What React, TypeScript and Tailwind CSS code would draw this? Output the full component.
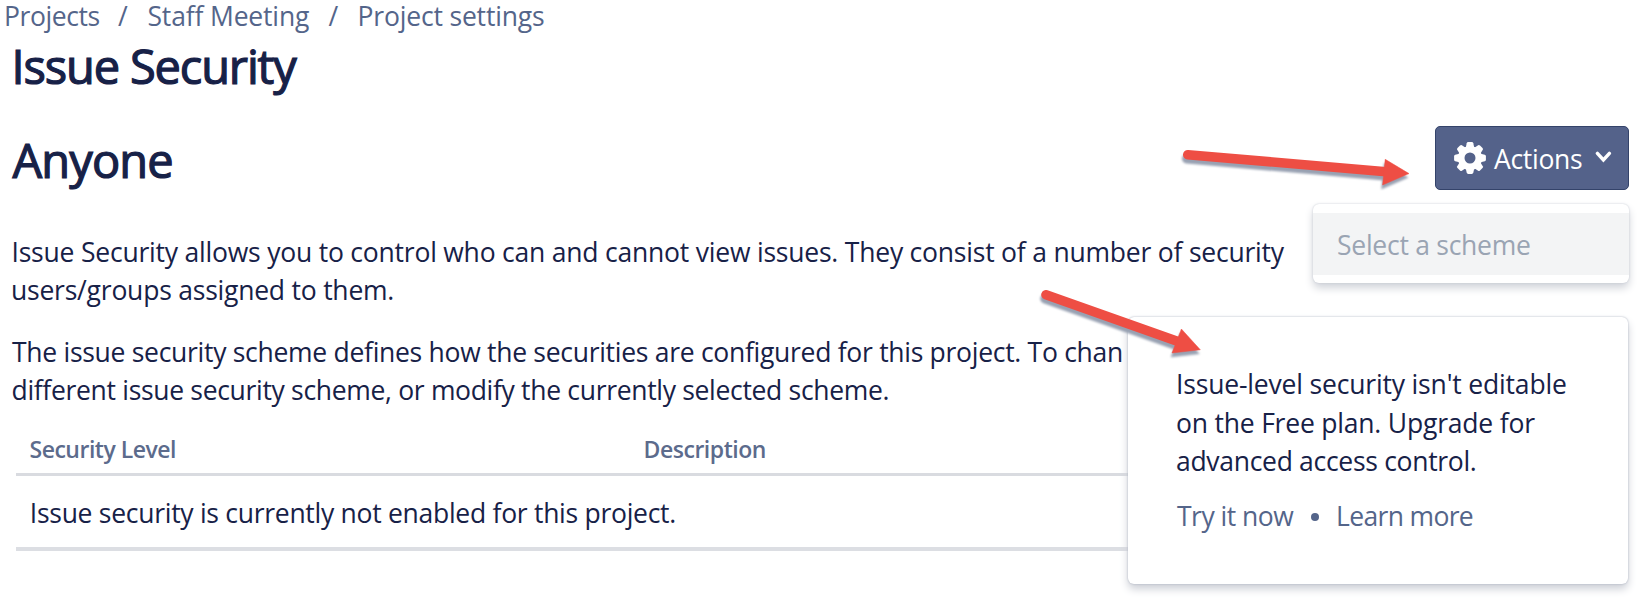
const teeth = [0, 45, 90, 135, 180, 225, 270, 315];

function GearIcon() {
  return (
    <svg className="h-8 w-8 shrink-0" viewBox="-16 -16 32 32" aria-hidden="true">
      <circle r="8.8" fill="none" stroke="white" strokeWidth="6.6" />
      {teeth.map((angle) => (
        <path
          key={angle}
          d="M-4.4 -9.5 L-3.3 -14.8 Q-3 -15.9 -1.8 -15.9 H1.8 Q3 -15.9 3.3 -14.8 L4.4 -9.5 Z"
          fill="white"
          transform={`rotate(${angle})`}
        />
      ))}
    </svg>
  );
}

function ChevronIcon() {
  return (
    <svg className="mb-[3px] ml-[13px] h-[12px] w-[17px] shrink-0" viewBox="0 0 17 12" aria-hidden="true">
      <path d="M2.4 2.4 L8.4 9 L14.4 2.4" fill="none" stroke="white" strokeWidth="3.4" strokeLinecap="round" />
    </svg>
  );
}

function Arrows() {
  return (
    <svg className="pointer-events-none absolute inset-0 h-[613px] w-[1650px]" viewBox="0 0 1650 613" aria-hidden="true">
      <g className="[filter:drop-shadow(-1px_4px_1px_#98a1b2)]" fill="#ee4e44" stroke="#ee4e44">
        <path d="M1187.8 154.7 L1386 171.8" fill="none" strokeWidth="9.6" strokeLinecap="round" />
        <path d="M1385.2 159.3 L1409 173.6 L1382.6 185 Z" strokeWidth="0.5" />
      </g>
      <g className="[filter:drop-shadow(-1px_4px_1px_#98a1b2)]" fill="#ee4e44" stroke="#ee4e44">
        <path d="M1046 294.8 L1178 341.5" fill="none" strokeWidth="9.6" strokeLinecap="round" />
        <path d="M1181.4 329 L1200.3 349.8 L1172 353 Z" strokeWidth="0.5" />
      </g>
    </svg>
  );
}

export default function App() {
  return (
    <div className="relative h-[613px] w-[1650px] bg-white font-['Open_Sans',sans-serif] text-[26.5px] whitespace-nowrap text-[#172147]">
      <nav className="flex h-8 pl-[4px] leading-8 text-[#54658a]">
        <a className="w-[114px] tracking-[-0.4px]">Projects</a>
        <span className="w-[29.5px] tracking-normal">/</span>
        <a className="w-[181px] tracking-[-0.16px]">Staff Meeting</a>
        <span className="w-[29px]">/</span>
        <a className="tracking-[-0.17px]">Project settings</a>
      </nav>

      <h1 className="mt-[3.5px] pl-[11.5px] text-[47px] leading-[60px] tracking-[-1.15px] [-webkit-text-stroke:1.2px_#172147]">
        Issue Security
      </h1>

      <div className="mt-[30.5px] flex h-16 items-center justify-between pr-[21px] pl-[12.5px]">
        <h2 className="pt-[4px] text-[47px] leading-[60px] tracking-[-0.9px] [-webkit-text-stroke:1.2px_#172147]">Anyone</h2>
        <button className="flex h-16 w-[194px] items-center rounded-[5px] border border-[#34436a] bg-[#54628a] pl-[18px] text-white">
          <GearIcon />
          <span className="ml-[8px] pt-[1px] leading-[38px] tracking-[-0.3px]">Actions</span>
          <ChevronIcon />
        </button>
      </div>

      <main className="pt-[42.5px]">
        <p className="leading-[38.67px]">
          <span className="block pl-[11.5px] tracking-[-0.21px]">
            Issue Security allows you to control who can and cannot view issues. They consist of a number of security
          </span>
          <span className="block pl-[11px] tracking-[-0.22px]">users/groups assigned to them.</span>
        </p>
        <p className="mt-[22.8px] leading-[38.67px]">
          <span className="block pl-[12px] tracking-[-0.285px]">
            The issue security scheme defines how the securities are configured for this project. To chan
          </span>
          <span className="block pl-[11.5px] tracking-[-0.315px]">
            different issue security scheme, or modify the currently selected scheme.
          </span>
        </p>

        <div className="mt-[23.4px] ml-4 w-[1120px]">
          <div className="flex border-b-[3px] border-[#d9dbe0] pb-[7.6px] pl-[13.5px] text-[23px] leading-8 font-semibold text-[#5c6b8c]">
            <span className="w-[614px] tracking-[-0.49px]">Security Level</span>
            <span className="tracking-[-0.46px]">Description</span>
          </div>
          <div className="border-b-4 border-[#dcdee3] pt-[18.5px] pb-[14.8px] pl-[13.8px] leading-[38px] tracking-[-0.276px]">
            Issue security is currently not enabled for this project.
          </div>
        </div>
      </main>

      <div className="absolute top-[204px] left-[1313px] h-[79px] w-[316px] rounded-[6px] bg-white pt-[9px] shadow-[0_0_2px_#c4c9d2,0_5px_8px_#d0d3d9]">
        <div className="h-[62px] bg-[#f3f4f5] pl-6 leading-[64px] tracking-[-0.26px] text-[#9aa4b3]">Select a scheme</div>
      </div>

      <div className="absolute top-[316.5px] left-[1128px] h-[267px] w-[500px] rounded-[6px] bg-white pt-[48.5px] pl-[48px] shadow-[0_0_2px_#a9b0be,0_5px_8px_#cccfd6]">
        <p className="leading-[38.67px]">
          <span className="block tracking-[-0.17px]">Issue-level security isn't editable</span>
          <span className="block tracking-[-0.2px]">on the Free plan. Upgrade for</span>
          <span className="block tracking-[-0.3px]">advanced access control.</span>
        </p>
        <div className="mt-[16px] flex items-center leading-[38.67px] text-[#54658a]">
          <a className="w-[135px] pl-[1px] tracking-[-0.5px]">Try it now</a>
          <span className="mt-[2px] h-[8px] w-[8px] rounded-full bg-[#54658a]" />
          <a className="ml-[17px] tracking-[-0.65px]">Learn more</a>
        </div>
      </div>

      <Arrows />
    </div>
  );
}
